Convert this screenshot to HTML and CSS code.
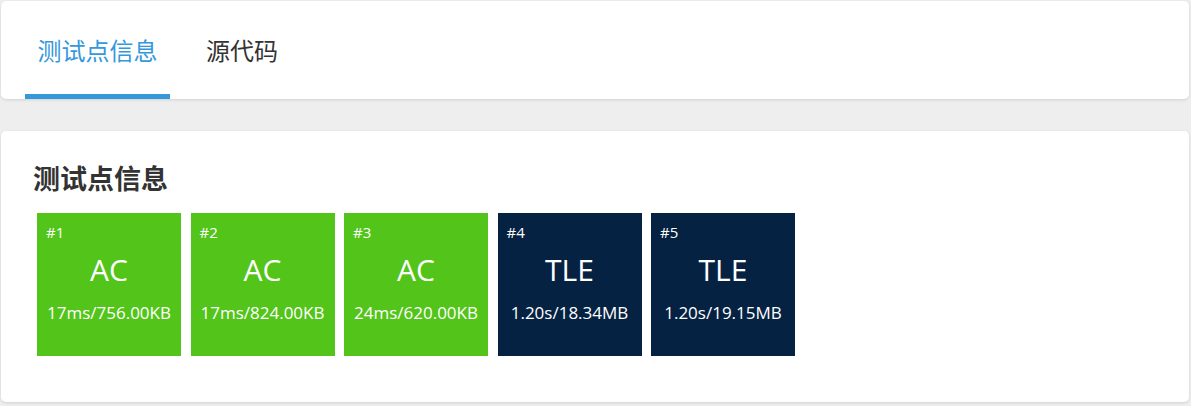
FILE: index.html
```html
<!DOCTYPE html>
<html>
<head>
<meta charset="utf-8">
<link rel="stylesheet" href="styles.css">
</head>
<body>
<div class="page">
  <div class="card tabs">
    <div class="tab active">测试点信息</div>
    <div class="tab">源代码</div>
  </div>
  <div class="card panel">
    <h2 class="title">测试点信息</h2>
    <div class="cases">
      <div class="case ac"><div class="num">#1</div><div class="status">AC</div><div class="usage">17ms/756.00KB</div></div>
      <div class="case ac"><div class="num">#2</div><div class="status">AC</div><div class="usage">17ms/824.00KB</div></div>
      <div class="case ac"><div class="num">#3</div><div class="status">AC</div><div class="usage">24ms/620.00KB</div></div>
      <div class="case tle"><div class="num">#4</div><div class="status">TLE</div><div class="usage">1.20s/18.34MB</div></div>
      <div class="case tle"><div class="num">#5</div><div class="status">TLE</div><div class="usage">1.20s/19.15MB</div></div>
    </div>
  </div>
</div>
</body>
</html>
```
FILE: styles.css
```css
html, body {
  margin: 0;
  padding: 0;
  background: #eeeeee;
  font-family: "Open Sans", "Noto Sans CJK SC", sans-serif;
  color: #333;
}
.page {
  padding: 1px 2px 4px 1px;
  display: flex;
  flex-direction: column;
  gap: 32px;
}
.card {
  background: #fff;
  border-radius: 5px;
  box-shadow: 0 1px 3px rgba(0,0,0,0.12);
}
.tabs {
  height: 98px;
  display: flex;
  padding-left: 24px;
  box-sizing: border-box;
}
.tab {
  height: 98px;
  box-sizing: border-box;
  padding: 0 12.5px;
  display: flex;
  align-items: center;
  font-size: 24px;
  color: #333;
  border-bottom: 5px solid transparent;
  padding-top: 3px;
  margin-right: 23.5px;
}
.tab.active {
  color: #3498db;
  border-bottom-color: #3498db;
}
.panel {
  height: 271px;
  box-sizing: border-box;
  padding: 30px 32px 0 32px;
}
.title {
  margin: 0 0 16px 0;
  font-size: 27px;
  font-weight: bold;
  line-height: 36px;
  color: #333;
}
.cases {
  display: flex;
  gap: 9.5px;
  margin-left: 4px;
}
.case {
  width: 144px;
  height: 143px;
  color: #fff;
  box-sizing: border-box;
  padding: 8px 9px 0 9px;
  display: flex;
  flex-direction: column;
}
.case.ac { background: #52c41a; }
.case.tle { background: #052242; }
.num {
  font-size: 15px;
  line-height: 22px;
}
.status {
  text-align: center;
  font-size: 30px;
  line-height: 40px;
  margin-top: 7px;
}
.usage {
  text-align: center;
  font-size: 17px;
  line-height: 22px;
  margin-top: 12px;
  white-space: nowrap;
  margin-left: -9px;
  margin-right: -9px;
}
```
